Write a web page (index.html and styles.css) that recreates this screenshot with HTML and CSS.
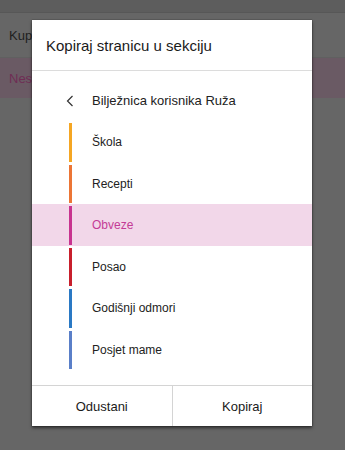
FILE: index.html
```html
<!DOCTYPE html>
<html lang="hr">
<head>
<meta charset="utf-8">
<link rel="stylesheet" href="styles.css">
</head>
<body>
<div class="page">
  <div class="topbar"></div>
  <div class="bg-row">Kup</div>
  <div class="bg-row bg-sel">Nes</div>
</div>
<div class="dialog">
  <div class="dlg-title">Kopiraj stranicu u sekciju</div>
  <div class="back-row">
    <svg class="chev" width="8" height="12" viewBox="0 0 8 12"><path d="M6.5 1 L1.5 6 L6.5 11" fill="none" stroke="#333" stroke-width="1.2"/></svg>
    <span>Bilježnica korisnika Ruža</span>
  </div>
  <ul class="sections">
    <li class="sec"><i class="bar c1"></i><span>Škola</span></li>
    <li class="sec"><i class="bar c2"></i><span>Recepti</span></li>
    <li class="sec active"><i class="bar c3"></i><span>Obveze</span></li>
    <li class="sec"><i class="bar c4"></i><span>Posao</span></li>
    <li class="sec"><i class="bar c5"></i><span>Godišnji odmori</span></li>
    <li class="sec"><i class="bar c6"></i><span>Posjet mame</span></li>
  </ul>
  <div class="footer">
    <button class="btn">Odustani</button>
    <button class="btn">Kopiraj</button>
  </div>
</div>
</body>
</html>
```
FILE: styles.css
```css
html, body {
  margin: 0;
  padding: 0;
  background: #666666;
  font-family: "Liberation Sans", Arial, sans-serif;
  width: 345px;
  height: 450px;
  overflow: hidden;
}
.page {
  display: flex;
  flex-direction: column;
}
.topbar {
  height: 12px;
  background: #5d5d5d;
  border-bottom: 1px solid #575757;
}
.bg-row {
  height: 45px;
  display: flex;
  align-items: center;
  padding-left: 9px;
  font-size: 13px;
  color: #1e1e1e;
  border-bottom: 1px solid #606060;
  box-sizing: border-box;
}
.bg-sel {
  height: 40px;
  background: #6a5a64;
  color: #6f2d54;
  border-bottom: none;
}
.dialog {
  position: absolute;
  left: 32px;
  top: 20px;
  width: 280px;
  height: 406px;
  background: #ffffff;
  box-shadow: 0 2px 3px rgba(0,0,0,0.55), 0 0 1px rgba(0,0,0,0.6);
  display: flex;
  flex-direction: column;
}
.dlg-title {
  height: 50px;
  display: flex;
  align-items: center;
  padding-left: 14px;
  font-size: 15px;
  color: #1a1a1a;
  border-bottom: 1px solid #dcdcdc;
}
.back-row {
  height: 50px;
  box-sizing: border-box;
  padding-top: 9px;
  display: flex;
  align-items: center;
  font-size: 13px;
  color: #222;
}
.chev {
  margin-left: 34px;
  margin-right: 18px;
}
.sections {
  list-style: none;
  margin: 0;
  padding: 0;
}
.sec {
  height: 42px;
  display: flex;
  align-items: center;
  font-size: 12px;
  color: #222;
}
.sec:nth-child(even) {
  height: 41px;
}
.sec span {
  margin-left: 20px;
}
.bar {
  display: block;
  margin-left: 37px;
  width: 3px;
  align-self: stretch;
  margin-top: 2px;
  margin-bottom: 1px;
}
.active {
  background: #f2d7e9;
  color: #c43b96;
}
.c1 { background: #f5a623; }
.c2 { background: #ec7535; }
.c3 { background: #c8338f; }
.c4 { background: #c81f2c; }
.c5 { background: #2a79c4; }
.c6 { background: #5a7fc8; }
.footer {
  margin-top: auto;
  height: 40px;
  display: flex;
  border-top: 1px solid #d4d4d4;
}
.btn {
  flex: 1;
  border: none;
  background: #fff;
  font-family: "Liberation Sans", Arial, sans-serif;
  font-size: 13px;
  color: #1a1a1a;
  padding: 0;
}
.btn + .btn {
  border-left: 1px solid #d4d4d4;
}
```
